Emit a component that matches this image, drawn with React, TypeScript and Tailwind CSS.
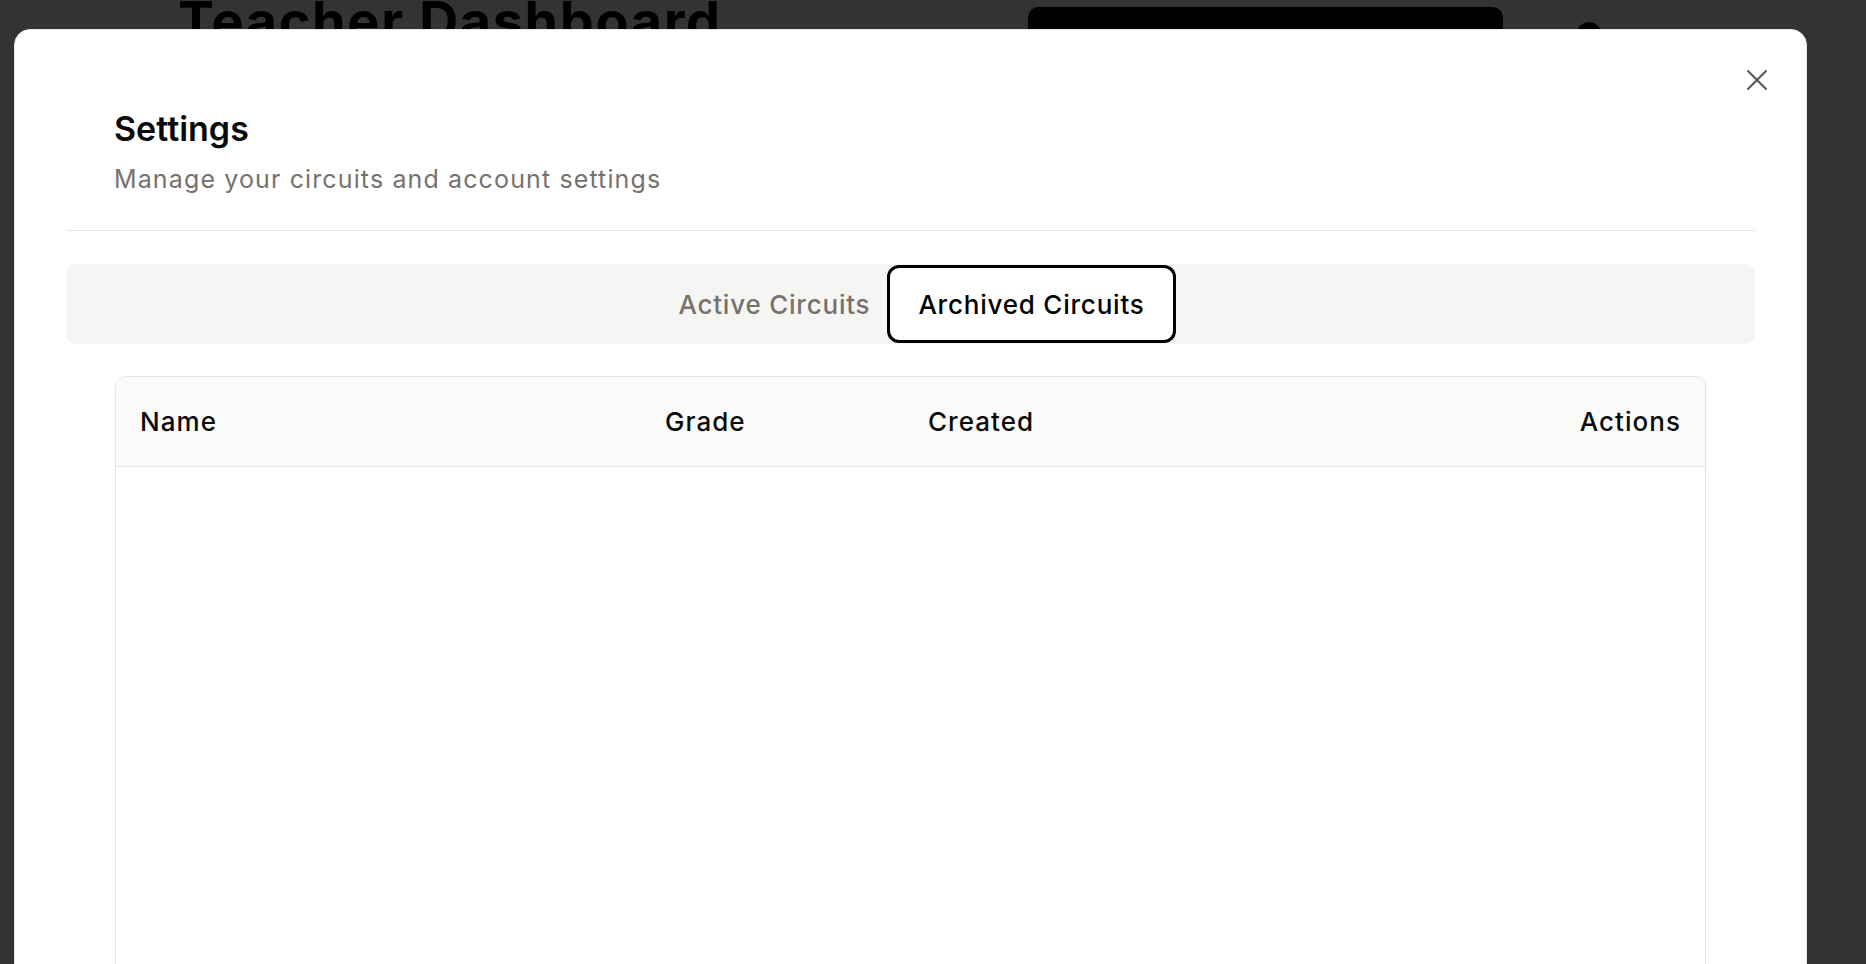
import { useState } from "react";

const tabs = ["Active Circuits", "Archived Circuits"];

function CloseIcon() {
  return (
    <svg width="22" height="22" viewBox="0 0 22 22" fill="none">
      <path d="M2 2L20 20M20 2L2 20" stroke="#555555" strokeWidth="2" strokeLinecap="round" />
    </svg>
  );
}

export default function App() {
  const [tab, setTab] = useState("Archived Circuits");

  return (
    <div className="relative h-screen w-full overflow-hidden bg-white" style={{ fontFamily: "Inter, 'Noto Sans', sans-serif" }}>

      {/* Page behind the dialog */}
      <div className="flex items-start pl-[178px]">
        <div className="w-[850px]">
          <h1 className="-mt-[6px] text-[54px] font-bold leading-none tracking-[0.03em] text-black">Teacher Dashboard</h1>
        </div>
        <div className="mt-[7px] h-[56px] w-[475px] rounded-[10px] bg-[#05070a]" />
        <div className="ml-[74px] mt-[22px] h-[24px] w-[24px] rounded-full bg-black" />
      </div>

      {/* Overlay */}
      <div className="absolute inset-0 bg-black/80" />

      {/* Dialog */}
      <div className="absolute left-[14px] top-[29px] flex h-[1100px] w-[1793px] flex-col rounded-2xl border border-gray-200 bg-white px-[51px] pt-[79px]">
        <button className="absolute right-[38px] top-[39px] p-0">
          <CloseIcon />
        </button>

        {/* Header */}
        <div className="px-12">
          <h2 className="text-[34px] font-semibold leading-[40px] text-[#0a0a0a]">Settings</h2>
          <p className="mt-[14px] text-[25px] leading-[32px] tracking-[0.045em] text-[#78716c]">Manage your circuits and account settings</p>
        </div>

        <div className="mt-[35px] h-px bg-[#e5e5e5]" />

        {/* Tabs */}
        <div className="mt-[33px] flex h-[80px] items-center justify-center rounded-[10px] bg-[#f5f5f4] pl-[16px]">
          {tabs.map((t) => (
            <button
              key={t}
              onClick={() => setTab(t)}
              className={
                t === tab
                  ? "h-[78px] rounded-[12px] border-[3px] border-black bg-white px-[28px] text-[26px] font-medium tracking-[0.03em] text-black"
                  : "h-[78px] rounded-[12px] border-[3px] border-transparent px-[14px] text-[26px] font-medium tracking-[0.03em] text-[#78716c]"
              }
            >
              {t}
            </button>
          ))}
        </div>

        {/* Table */}
        <div className="mx-[49px] mt-8 flex-1 overflow-hidden rounded-[10px] border border-[#e7e5e4]">
          <div className="grid h-[90px] grid-cols-[525px_263px_1fr_auto] items-center border-b border-[#e7e5e4] bg-[#fafaf9] text-[26px] font-medium tracking-[0.04em] text-[#0a0a0a]">
            <div className="pl-6">Name</div>
            <div className="pl-6">Grade</div>
            <div className="pl-6">Created</div>
            <div className="pr-6 text-right">Actions</div>
          </div>
          <div className="h-full" />
        </div>
      </div>
    </div>
  );
}
